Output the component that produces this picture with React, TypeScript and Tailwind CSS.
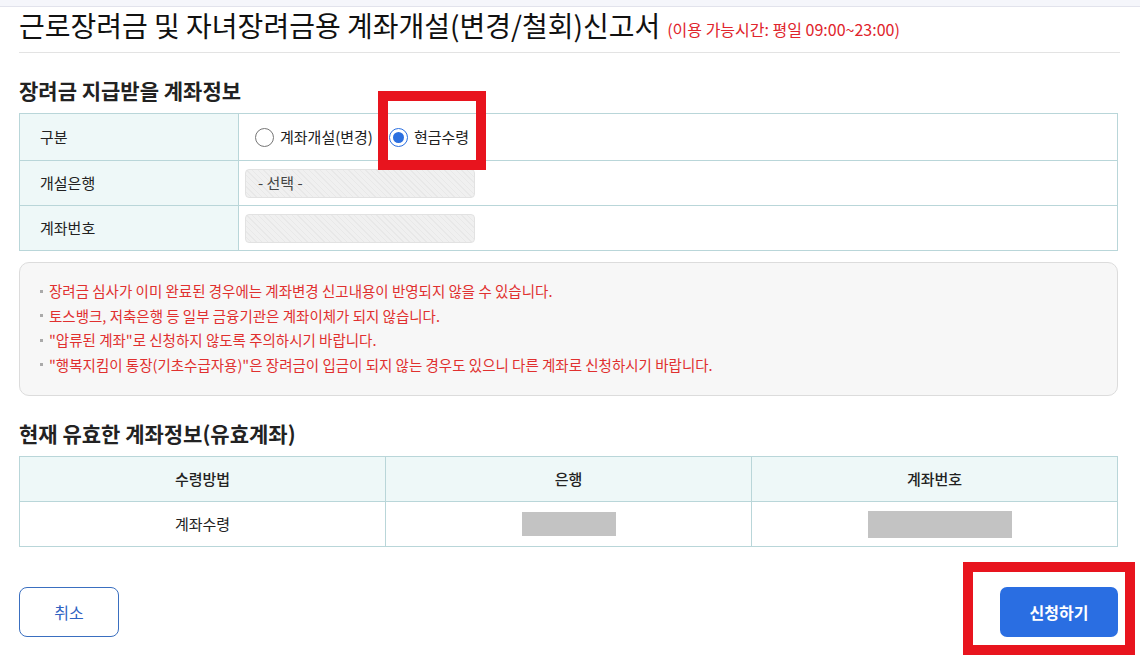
import { useState } from "react";

const font = "font-['Noto_Sans_CJK_KR','Noto_Sans',sans-serif]";

const notices = [
  "장려금 심사가 이미 완료된 경우에는 계좌변경 신고내용이 반영되지 않을 수 있습니다.",
  "토스뱅크, 저축은행 등 일부 금융기관은 계좌이체가 되지 않습니다.",
  "\"압류된 계좌\"로 신청하지 않도록 주의하시기 바랍니다.",
  "\"행복지킴이 통장(기초수급자용)\"은 장려금이 입금이 되지 않는 경우도 있으니 다른 계좌로 신청하시기 바랍니다.",
];

const hatch =
  "bg-[repeating-linear-gradient(45deg,#f0f0f0_0px,#f0f0f0_3px,#e8e8e8_3px,#e8e8e8_4px)]";

function Radio({ checked, label, onClick }: { checked: boolean; label: string; onClick: () => void }) {
  return (
    <button type="button" onClick={onClick} className="flex items-center gap-[6px]">
      <span
        className={
          "flex h-[19px] w-[19px] items-center justify-center rounded-full border bg-white " +
          (checked ? "border-[#2b6fe0]" : "border-[#767676]")
        }
      >
        {checked && <span className="h-[11px] w-[11px] rounded-full bg-[#2b6fe0]" />}
      </span>
      <span className="text-[15px] text-[#222]">{label}</span>
    </button>
  );
}

export default function App() {
  const [method, setMethod] = useState("cash");

  return (
    <div className={`relative h-[661px] w-[1140px] overflow-hidden bg-white ${font}`}>
      {/* top strip */}
      <div className="h-[7px] border-b border-[#e2e3ec] bg-[#f5f6fb]" />

      <div className="ml-[19px] w-[1101px]">
        {/* title */}
        <div className="flex items-end gap-[7px] border-b border-[#e3e3e3] pb-[10px] pt-[1px]">
          <h1 className="text-[28px] leading-[34px] text-[#111]">
            근로장려금 및 자녀장려금용 계좌개설(변경/철회)신고서
          </h1>
          <span className="pb-[3px] text-[16px] leading-[20px] text-[#e0242c]">(이용 가능시간: 평일 09:00~23:00)</span>
        </div>

        <div className="w-[1099px]">
          <h2 className="mt-[24px] text-[21px] font-bold leading-[26px] text-[#222]">장려금 지급받을 계좌정보</h2>

          <div className="mt-[10px] border-t border-[#b9d6d9]">
            <div className="flex h-[47px] border-b border-x border-[#b9d6d9]">
              <div className="flex w-[219px] items-center border-r border-[#b9d6d9] bg-[#eef8f8] pl-[20px] text-[15px] text-[#222]">구분</div>
              <div className="flex flex-1 items-center gap-[16px] pl-[16px]">
                <Radio checked={method === "open"} label="계좌개설(변경)" onClick={() => setMethod("open")} />
                <Radio checked={method === "cash"} label="현금수령" onClick={() => setMethod("cash")} />
              </div>
            </div>
            <div className="flex h-[45px] border-b border-x border-[#b9d6d9]">
              <div className="flex w-[219px] items-center border-r border-[#b9d6d9] bg-[#eef8f8] pl-[20px] text-[15px] text-[#222]">개설은행</div>
              <div className="flex flex-1 items-center pl-[6px]">
                <div className={`flex h-[29px] w-[230px] items-center rounded-[4px] border border-[#e2e2e2] pl-[12px] text-[15px] text-[#444] ${hatch}`}>
                  - 선택 -
                </div>
              </div>
            </div>
            <div className="flex h-[45px] border-b border-x border-[#b9d6d9]">
              <div className="flex w-[219px] items-center border-r border-[#b9d6d9] bg-[#eef8f8] pl-[20px] text-[15px] text-[#222]">계좌번호</div>
              <div className="flex flex-1 items-center pl-[6px]">
                <div className={`h-[29px] w-[230px] rounded-[4px] border border-[#e2e2e2] ${hatch}`} />
              </div>
            </div>
          </div>

          <div className="mt-[11px] rounded-[10px] border border-[#dcdcdc] bg-[#f7f7f7] px-[20px] pb-[20px] pt-[18px]">
            <ul className="flex flex-col gap-[4px]">
              {notices.map((n, i) => (
                <li key={i} className="flex items-center gap-[6px] text-[14.5px] leading-[20.5px] text-[#e0302f]">
                  <span className="h-[3px] w-[3px] bg-[#aaa]" />
                  {n}
                </li>
              ))}
            </ul>
          </div>

          <h2 className="mt-[24px] text-[21px] font-bold leading-[26px] text-[#222]">현재 유효한 계좌정보(유효계좌)</h2>

          <div className="mt-[10px] grid grid-cols-3 border-l border-t border-[#b9d6d9] text-[15px] text-[#222]">
            {["수령방법", "은행", "계좌번호"].map((h) => (
              <div key={h} className="flex h-[45px] items-center justify-center border-b border-r border-[#b9d6d9] bg-[#eef8f8] font-medium">
                {h}
              </div>
            ))}
            <div className="flex h-[45px] items-center justify-center border-b border-r border-[#b9d6d9]">계좌수령</div>
            <div className="flex h-[45px] items-center justify-center border-b border-r border-[#b9d6d9]">
              <div className="h-[24px] w-[94px] bg-[#c3c3c3]" />
            </div>
            <div className="flex h-[45px] items-center justify-center border-b border-r border-[#b9d6d9]">
              <div className="ml-[10px] h-[27px] w-[144px] bg-[#c3c3c3]" />
            </div>
          </div>

          <div className="mt-[40px] flex justify-between">
            <button type="button" className="h-[50px] w-[100px] rounded-[8px] border border-[#3a6fc0] bg-white text-[16px] text-[#2f62c2]">
              취소
            </button>
            <button type="button" className="h-[50px] w-[118px] rounded-[7px] bg-[#2a6ee2] text-[16px] font-bold text-white">
              신청하기
            </button>
          </div>
        </div>
      </div>

      {/* red annotation boxes */}
      <div className="pointer-events-none absolute left-[378px] top-[91px] h-[79px] w-[108px] border-[10px] border-[#e8141e]" />
      <div className="pointer-events-none absolute left-[963px] top-[562px] h-[93px] w-[172px] border-[10px] border-[#e8141e]" />
    </div>
  );
}
